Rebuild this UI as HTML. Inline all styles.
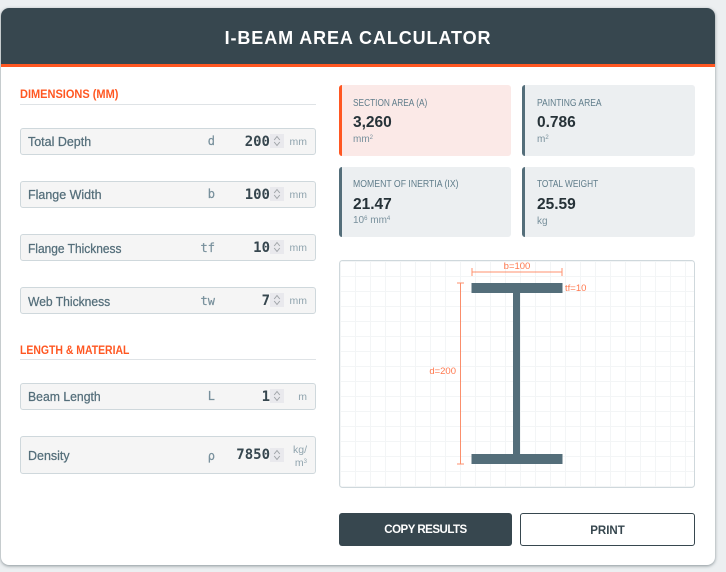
<!DOCTYPE html>
<html>
<head>
<meta charset="utf-8">
<style>
html,body{margin:0;padding:0;width:726px;height:572px;overflow:hidden;background:#eceff1;font-family:"Liberation Sans",sans-serif}
*{box-sizing:border-box}
.card{position:absolute;left:1px;top:8px;width:714px;height:557px;background:#fff;border-radius:8px;box-shadow:0 1px 3px rgba(55,71,79,.55);overflow:hidden}
.a{position:absolute;white-space:nowrap}
.hdr{left:1px;top:8px;width:714px;height:59px;background:#37474f;border-bottom:3px solid #ff5722;border-radius:8px 8px 0 0;color:#fff;font-weight:700;font-size:18px;letter-spacing:.9px;text-align:center;line-height:60px}
.sec{left:20px;font-size:12px;font-weight:700;color:#ff5722;line-height:14px;transform-origin:0 50%}
.rule{left:20px;width:296px;height:1px;background:#dfe3e6}
.box{left:20px;width:296px;background:#f5f5f5;border:1px solid #cfd8dc;border-radius:3px}
.lab{left:28px;font-size:13px;color:#546e7a;line-height:16px;transform-origin:0 50%;-webkit-text-stroke:.25px #546e7a}
.sym{width:40px;left:175px;text-align:right;font-family:"DejaVu Sans Mono",monospace;font-size:12px;color:#78909c;line-height:14px;-webkit-text-stroke:.2px #78909c}
.val{width:60px;left:210px;text-align:right;font-family:"DejaVu Sans Mono",monospace;font-weight:700;font-size:14px;color:#37474f;line-height:16px}
.spin{left:270px;width:14px;height:14px}
.unit{width:30px;left:277px;text-align:right;font-size:10.5px;color:#90a4ae;line-height:12px}
.res{width:172px;background:#eceff1;border-left:3px solid #546e7a;border-radius:3px}
.rl{font-size:10px;color:#607d8b;line-height:12px;transform-origin:0 50%}
.rv{font-size:15.5px;font-weight:700;color:#263238;line-height:18px}
.ru{font-size:10px;color:#78909c;line-height:12px}
sup{font-size:6px;line-height:0;vertical-align:3px}
.btn{top:513px;height:33px;border-radius:3px;font-size:11.5px;font-weight:700;text-align:center;line-height:35px}
</style>
</head>
<body>
<div class="card"></div>
<div class="a hdr">I-BEAM AREA CALCULATOR</div>

<div class="a sec" style="top:87px;transform:scaleX(.917)">DIMENSIONS (MM)</div>
<div class="a rule" style="top:104px"></div>

<div class="a box" style="top:128px;height:27px"></div>
<div class="a lab" style="top:134px;transform:scaleX(.96)">Total Depth</div>
<div class="a sym" style="top:134px">d</div>
<div class="a val" style="top:134px">200</div>
<svg class="a spin" style="top:134px" viewBox="0 0 14 14"><rect width="14" height="14" fill="#e9e9ed"/><path d="M4.200 6L7 2.500L9.800 6M4.200 8L7 11.500L9.800 8" fill="none" stroke="#a0a4a8" stroke-width="1"/></svg>
<div class="a unit" style="top:136px">mm</div>

<div class="a box" style="top:181px;height:27px"></div>
<div class="a lab" style="top:187px;transform:scaleX(.96)">Flange Width</div>
<div class="a sym" style="top:187px">b</div>
<div class="a val" style="top:187px">100</div>
<svg class="a spin" style="top:187px" viewBox="0 0 14 14"><rect width="14" height="14" fill="#e9e9ed"/><path d="M4.200 6L7 2.500L9.800 6M4.200 8L7 11.500L9.800 8" fill="none" stroke="#a0a4a8" stroke-width="1"/></svg>
<div class="a unit" style="top:189px">mm</div>

<div class="a box" style="top:234px;height:27px"></div>
<div class="a lab" style="top:241px;transform:scaleX(.92)">Flange Thickness</div>
<div class="a sym" style="top:241px">tf</div>
<div class="a val" style="top:240px">10</div>
<svg class="a spin" style="top:240px" viewBox="0 0 14 14"><rect width="14" height="14" fill="#e9e9ed"/><path d="M4.200 6L7 2.500L9.800 6M4.200 8L7 11.500L9.800 8" fill="none" stroke="#a0a4a8" stroke-width="1"/></svg>
<div class="a unit" style="top:242px">mm</div>

<div class="a box" style="top:287px;height:27px"></div>
<div class="a lab" style="top:294px;transform:scaleX(.93)">Web Thickness</div>
<div class="a sym" style="top:294px">tw</div>
<div class="a val" style="top:293px">7</div>
<svg class="a spin" style="top:293px" viewBox="0 0 14 14"><rect width="14" height="14" fill="#e9e9ed"/><path d="M4.200 6L7 2.500L9.800 6M4.200 8L7 11.500L9.800 8" fill="none" stroke="#a0a4a8" stroke-width="1"/></svg>
<div class="a unit" style="top:295px">mm</div>

<div class="a sec" style="top:343px;transform:scaleX(.87)">LENGTH &amp; MATERIAL</div>
<div class="a rule" style="top:359px"></div>

<div class="a box" style="top:383px;height:27px"></div>
<div class="a lab" style="top:389px;transform:scaleX(.94)">Beam Length</div>
<div class="a sym" style="top:389px">L</div>
<div class="a val" style="top:389px">1</div>
<svg class="a spin" style="top:389px" viewBox="0 0 14 14"><rect width="14" height="14" fill="#e9e9ed"/><path d="M4.200 6L7 2.500L9.800 6M4.200 8L7 11.500L9.800 8" fill="none" stroke="#a0a4a8" stroke-width="1"/></svg>
<div class="a unit" style="top:391px">m</div>

<div class="a box" style="top:436px;height:38px"></div>
<div class="a lab" style="top:448px;transform:scaleX(.96)">Density</div>
<div class="a sym" style="top:449px">ρ</div>
<div class="a val" style="top:447px">7850</div>
<svg class="a spin" style="top:448px" viewBox="0 0 14 14"><rect width="14" height="14" fill="#e9e9ed"/><path d="M4.200 6L7 2.500L9.800 6M4.200 8L7 11.500L9.800 8" fill="none" stroke="#a0a4a8" stroke-width="1"/></svg>
<div class="a unit" style="top:444px">kg/</div>
<div class="a unit" style="top:457px">m<sup>3</sup></div>

<div class="a res" style="left:339px;top:85px;height:71px;background:#fbe9e7;border-left-color:#ff5722"></div>
<div class="a rl" style="left:353px;top:98px;transform:scaleX(.83)">SECTION AREA (A)</div>
<div class="a rv" style="left:353px;top:114px">3,260</div>
<div class="a ru" style="left:353px;top:134px">mm<sup>2</sup></div>

<div class="a res" style="left:522px;top:85px;height:71px;width:173px"></div>
<div class="a rl" style="left:537px;top:98px;transform:scaleX(.85)">PAINTING AREA</div>
<div class="a rv" style="left:537px;top:114px">0.786</div>
<div class="a ru" style="left:537px;top:134px">m<sup>2</sup></div>

<div class="a res" style="left:339px;top:167px;height:70px"></div>
<div class="a rl" style="left:353px;top:179px;transform:scaleX(.87)">MOMENT OF INERTIA (IX)</div>
<div class="a rv" style="left:353px;top:196px">21.47</div>
<div class="a ru" style="left:353px;top:215px">10<sup>6</sup> mm<sup>4</sup></div>

<div class="a res" style="left:522px;top:167px;height:70px;width:173px"></div>
<div class="a rl" style="left:537px;top:179px;transform:scaleX(.83)">TOTAL WEIGHT</div>
<div class="a rv" style="left:537px;top:196px">25.59</div>
<div class="a ru" style="left:537px;top:216px">kg</div>

<svg class="a" style="left:339px;top:260px" width="356" height="228" viewBox="0 0 356 228">
<defs><pattern id="g" width="15" height="15" patternUnits="userSpaceOnUse" x="2" y="2"><path d="M14.500 0V15M0 14.500H15" fill="none" stroke="#f3f5f6" stroke-width="1"/></pattern></defs>
<rect x=".5" y=".5" width="355" height="227" rx="3" fill="#fff" stroke="#cfd8dc"/>
<rect x="1" y="1" width="354" height="226" rx="3" fill="url(#g)"/>
<rect x="132.500" y="23" width="91" height="10" fill="#546e7a"/>
<rect x="174" y="33" width="7" height="161" fill="#546e7a"/>
<rect x="132.500" y="194" width="91" height="10" fill="#546e7a"/>
<g stroke="#ff5722" stroke-width="1" opacity=".65" fill="none">
<path d="M133 12H223M133 8V16M223 8V16"/>
<path d="M121.500 23V204M118 23H125M118 204H125"/>
</g>
<g fill="#ff5722" opacity=".8" font-family="Liberation Sans" font-size="9.500">
<text x="178" y="9" text-anchor="middle">b=100</text>
<text x="226" y="31">tf=10</text>
<text x="117" y="114" text-anchor="end">d=200</text>
</g>
</svg>

<div class="a btn" style="left:339px;width:173px;background:#37474f;color:#fff;letter-spacing:-.5px">COPY RESULTS</div>
<div class="a btn" style="left:520px;width:175px;background:#fff;color:#37474f;border:1px solid #37474f;line-height:34px">PRINT</div>
</body>
</html>
